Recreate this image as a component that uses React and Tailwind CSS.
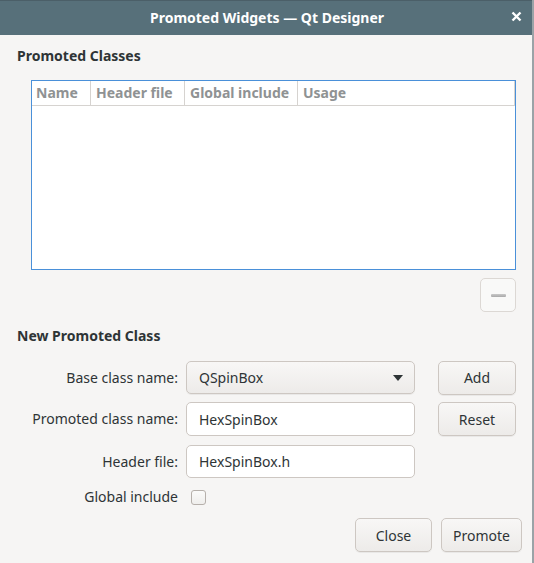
import React from "react";

const font = { fontFamily: '"Noto Sans", "Open Sans", sans-serif' };

const btnBase =
  "flex items-center rounded-[5px] border border-[#cdc7c2] bg-gradient-to-b from-[#f8f7f6] to-[#edebe9] text-[14px] text-[#2e3436] shadow-[0_1px_0_rgba(0,0,0,0.05)]";

function Btn({ children, className = "" }) {
  return <div className={btnBase + " justify-center " + className}>{children}</div>;
}

function Label({ children }) {
  return (
    <div className="w-[161px] shrink-0 text-right text-[14px] text-[#2e3436] leading-[20px]">
      {children}
    </div>
  );
}

export default function App() {
  return (
    <div
      className="w-[534px] h-[563px] bg-[#f6f5f4] flex flex-col border-r-2 border-[#9aa3a7] overflow-hidden"
      style={font}
    >
      <div className="relative h-[35px] shrink-0 bg-[#57707a] border-t border-[#4b5f68] flex items-center justify-center">
        <span className="ml-[2px] text-white font-bold text-[14px] leading-[20px]">
          Promoted Widgets — Qt Designer
        </span>
        <span className="absolute right-[10px] top-[10px]">
          <svg width="11" height="11" viewBox="0 0 11 11">
            <path d="M1.5 1.5 L9.5 9.5 M9.5 1.5 L1.5 9.5" stroke="white" strokeWidth="2.4" />
          </svg>
        </span>
      </div>

      <div className="flex flex-col pl-[17px] pr-[15px]">
        <div className="mt-[11px] text-[14px] leading-[20px] font-bold text-[#2e3436]">
          Promoted Classes
        </div>

        <div className="mt-[14px] ml-[14px] mr-[1px] h-[190px] border border-[#4a90d9] bg-white">
          <div className="flex h-[25px] border-b border-[#d6d3d0] text-[14px] font-bold text-[#8f9293] leading-[20px]">
            <div className="w-[59px] border-r border-[#d6d3d0] pl-[4px] flex items-center">Name</div>
            <div className="w-[94px] border-r border-[#d6d3d0] pl-[5px] flex items-center">Header file</div>
            <div className="w-[113px] border-r border-[#d6d3d0] pl-[5px] flex items-center">Global include</div>
            <div className="flex-1 border-r border-[#d6d3d0] pl-[5px] flex items-center">Usage</div>
          </div>
        </div>

        <div className="mt-[8px] mr-[1px] self-end w-[36px] h-[34px] rounded-[5px] border border-[#dcd8d4] bg-[#f9f9f8] flex items-center justify-center">
          <div className="w-[15px] h-[3px] rounded-[1px] bg-gradient-to-b from-[#c9c9c9] to-[#a9a9a9]" />
        </div>

        <div className="mt-[14px] text-[14px] leading-[20px] font-bold text-[#2e3436]">
          New Promoted Class
        </div>

        <div className="mt-[15px] flex items-center h-[33px]">
          <Label>Base class name:</Label>
          <div className={btnBase + " justify-between ml-[8px] w-[229px] h-[33px] pl-[12px] pr-[11px]"}>
            <span className="leading-[20px]">QSpinBox</span>
            <svg width="10" height="6" viewBox="0 0 10 6">
              <path d="M0 0 L10 0 L5 6 Z" fill="#2e3436" />
            </svg>
          </div>
          <Btn className="ml-[23px] w-[78px] h-[34px]">Add</Btn>
        </div>

        <div className="mt-[8px] flex items-center h-[34px]">
          <Label>Promoted class name:</Label>
          <div className="ml-[8px] w-[229px] h-[34px] rounded-[5px] border border-[#cdc7c2] bg-white flex items-center pl-[12px] text-[14px] text-[#2e3436]">
            HexSpinBox
          </div>
          <Btn className="ml-[23px] w-[78px] h-[34px]">Reset</Btn>
        </div>

        <div className="mt-[9px] flex items-center h-[33px]">
          <Label>Header file:</Label>
          <div className="ml-[8px] w-[229px] h-[33px] rounded-[5px] border border-[#cdc7c2] bg-white flex items-center pl-[12px] text-[14px] text-[#2e3436]">
            HexSpinBox.h
          </div>
        </div>

        <div className="mt-[11px] flex items-center h-[16px]">
          <Label>Global include</Label>
          <div className="ml-[13px] w-[15px] h-[15px] rounded-[3px] border border-[#b6b0ab] bg-gradient-to-b from-[#fbfbfa] to-[#efeeec]" />
        </div>

        <div className="mt-[13px] flex justify-end mr-[-5px] gap-[9px]">
          <Btn className="w-[77px] h-[34px]">Close</Btn>
          <Btn className="w-[81px] h-[34px]">Promote</Btn>
        </div>
      </div>
    </div>
  );
}
